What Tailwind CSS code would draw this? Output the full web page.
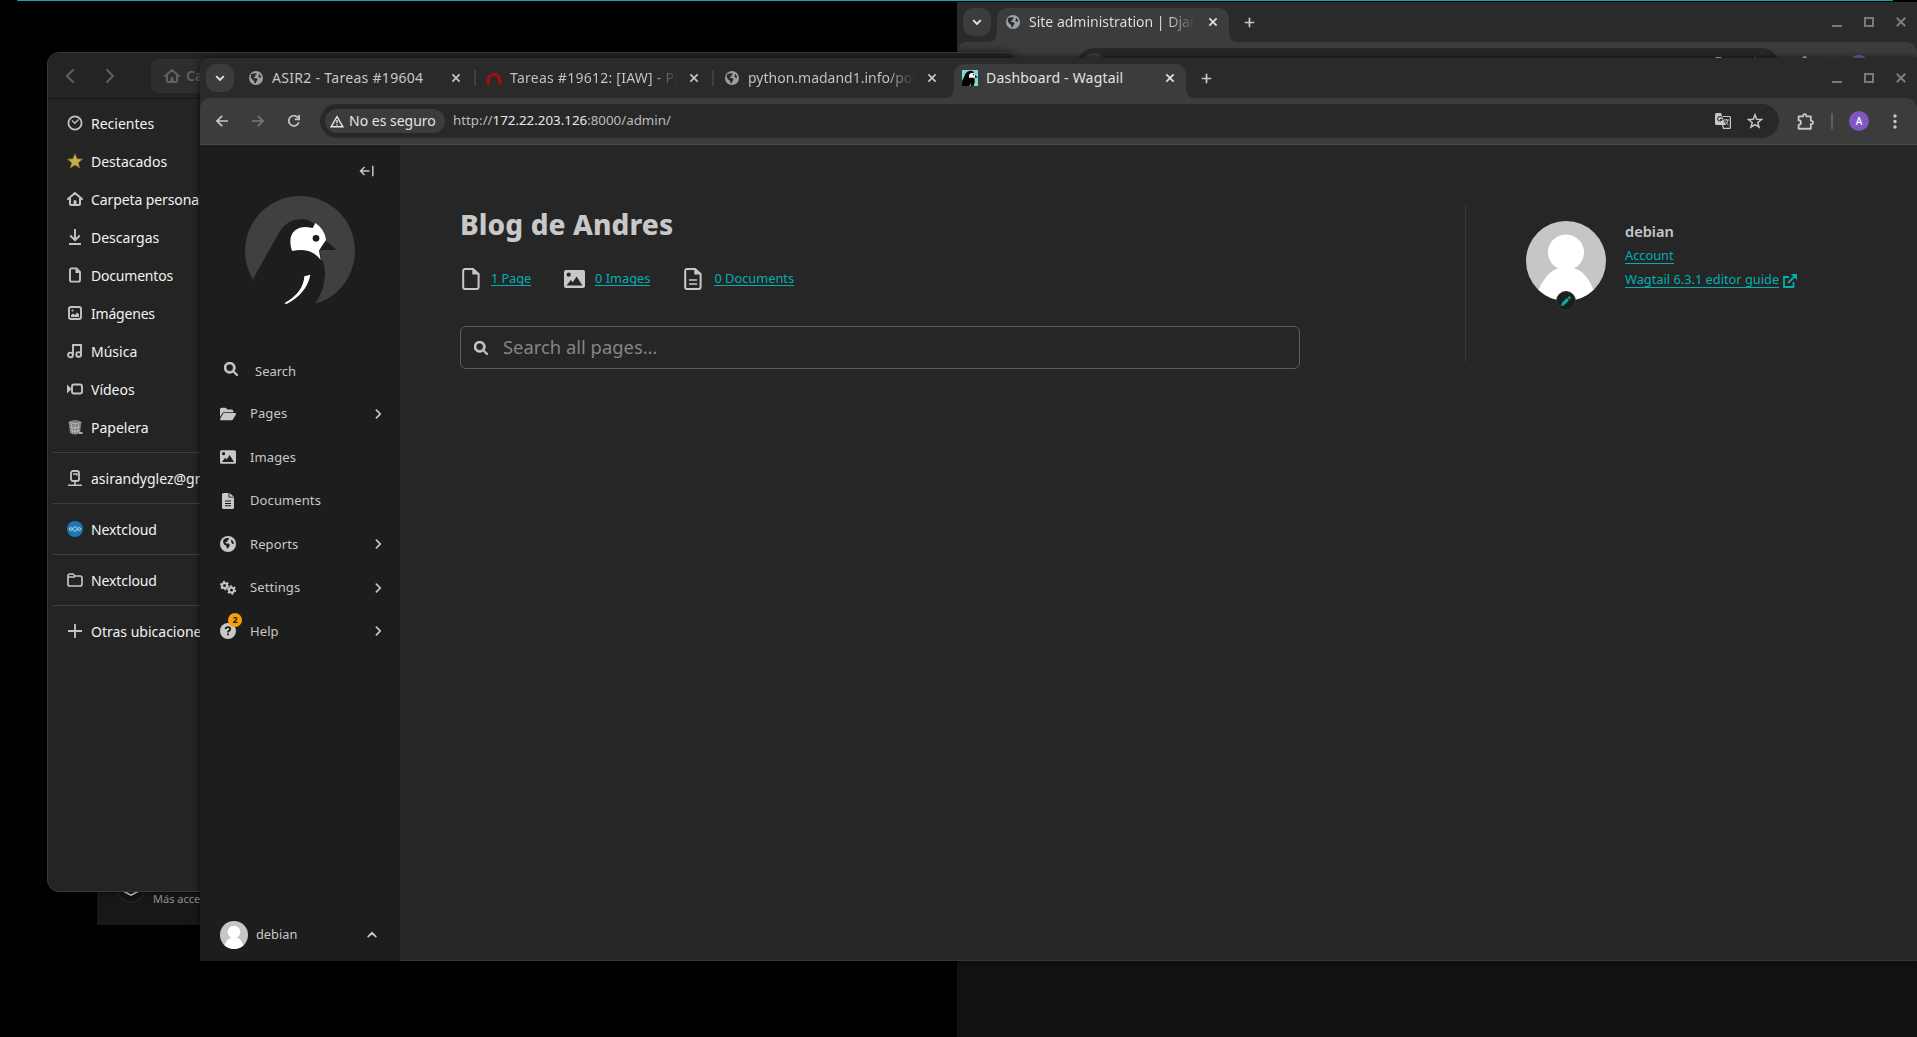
<!DOCTYPE html>
<html lang="es">
<head>
<meta charset="utf-8">
<title>Dashboard - Wagtail</title>
<script src="https://cdn.jsdelivr.net/npm/@tailwindcss/browser@4"></script>
</head>
<body class="relative h-[1037px] w-[1917px] overflow-hidden bg-black font-['Noto_Sans',sans-serif] text-[14px] leading-none whitespace-nowrap">

<svg class="hidden">
  <symbol id="globe" viewBox="0 0 16 16"><circle cx="8" cy="8" r="8" fill="currentColor"/><path d="M2.300 3.800Q5 2.200 8.200 2.600L9 3.600 7.200 4.800 7.400 6.200 5.400 7 6 8 9 8.400 9.800 10 8.400 12 7.600 14 6.200 13.600 5.600 11.200 3.600 9.600 2 7ZM11.400 3.200Q13.400 4.600 13.900 7L12.600 8 11.400 7.200 10.400 5.600 11.400 4.800Z" fill="#2c2c2c"/></symbol>
  <symbol id="earth" viewBox="0 0 16 16"><circle cx="8" cy="8" r="8" fill="currentColor"/><path d="M3.600 3.400Q5.600 1.700 8.400 1.800L9 3.200 7.600 4.400 7.200 5.800 5.400 6.200 6 7.400 8.800 7.600 10 9.200 9 11 7.800 12.600 6.800 12.200 6.200 9.800 4 8.600 3 6ZM11.600 3.600Q13.600 5 14 7.600L12.800 8.200 11.600 7 11 5Z" fill="#222"/></symbol>
  <symbol id="x" viewBox="0 0 10 10"><path d="M1.400 1.400 8.600 8.600M8.600 1.400 1.400 8.600" stroke="currentColor" stroke-width="1.700" fill="none"/></symbol>
  <symbol id="plus" viewBox="0 0 12 12"><path d="M6 .8V11.200M.8 6H11.200" stroke="currentColor" stroke-width="1.900"/></symbol>
  <symbol id="down" viewBox="0 0 10 10"><path d="M1.200 3.200 5 7 8.800 3.200" stroke="currentColor" stroke-width="1.900" fill="none"/></symbol>
  <symbol id="right" viewBox="0 0 10 10"><path d="M3.400 1.200 7.200 5 3.400 8.800" stroke="currentColor" stroke-width="1.700" fill="none" stroke-linecap="round"/></symbol>
  <symbol id="house" viewBox="0 0 16 16"><path d="M1 8 8 2 15 8M3 7.400V12.500Q3 14 4.500 14H11.500Q13 14 13 12.500V7.400" stroke="currentColor" stroke-width="2" fill="none" stroke-linecap="round" stroke-linejoin="round"/><path d="M6.500 14V10.500Q6.500 9 8 9T9.500 10.500V14Z" fill="currentColor"/></symbol>
  <symbol id="lens" viewBox="0 0 512 512"><path fill="currentColor" d="M416 208c0 45.900-14.900 88.300-40 122.700L502.600 457.400c12.500 12.500 12.500 32.800 0 45.300s-32.800 12.500-45.300 0L330.700 376c-34.400 25.200-76.800 40-122.700 40C93.100 416 0 322.900 0 208S93.100 0 208 0S416 93.100 416 208zM208 342a134 134 0 1 0 0-268 134 134 0 1 0 0 268z" stroke="currentColor" stroke-width="22"/></symbol>
  <symbol id="picture" viewBox="0 0 21 18"><path fill="currentColor" fill-rule="evenodd" d="M2 0H19Q21 0 21 2V16Q21 18 19 18H2Q0 18 0 16V2Q0 0 2 0ZM4.700 2.600A2.100 2.100 0 1 0 4.700 6.800 2.100 2.100 0 1 0 4.700 2.600ZM2.600 15.400H18.400L12.600 6.400 8.800 12.200 6.800 10Z"/></symbol>
  <symbol id="person" viewBox="0 0 80 80"><circle cx="40" cy="40" r="40" fill="#c6c6c6"/><path fill="#fff" d="M12.500 69Q21 50 32 47.500A18 18 0 1 1 48 47.500Q60 50 67.500 69A40 40 0 0 1 12.500 69Z"/></symbol>
  <symbol id="flareL" viewBox="0 0 10 10"><path d="M10 0V10H0Q10 10 10 0Z" fill="#3c3c3c"/></symbol>
  <symbol id="flareR" viewBox="0 0 10 10"><path d="M0 0V10H10Q0 10 0 0Z" fill="#3c3c3c"/></symbol>
  <symbol id="translate" viewBox="0 0 16 16"><path d="M1.500 0H6L10.500 12H1.500Q0 12 0 10.500V1.500Q0 0 1.500 0Z" fill="#c7c7c7"/><path d="M6.800 4.600A2.200 2.200 0 1 0 7 6.500H5" stroke="#282828" stroke-width="1.100" fill="none"/><path d="M8 3.500H14.500Q15.400 3.500 15.400 4.400V14.500Q15.400 15.400 14.500 15.400H8.500L7.500 12" stroke="#c7c7c7" stroke-width="1.200" fill="none"/><path d="M9 7H14M11.500 6V7M13 7Q12.500 10 9.800 12M10.300 8.500Q11.500 11 13.500 12" stroke="#c7c7c7" fill="none"/></symbol>
  <symbol id="star" viewBox="0 0 16 16"><path d="M8 1.700 9.700 6.200 14.500 6.500 10.800 9.500 12 14.100 8 11.600 4 14.100 5.200 9.500 1.500 6.500 6.300 6.200Z" fill="none" stroke="currentColor" stroke-width="1.500"/></symbol>
  <symbol id="puzzle" viewBox="0 0 16 16"><path d="M1.500 3.200H5.800V2.600A1.500 1.500 0 0 1 8.800 2.600V3.200H13V7.400H13.600A1.500 1.500 0 0 1 13.600 10.400H13V14.800H1.500V11.200A2.200 2.200 0 0 0 1.500 6.800Z" stroke="currentColor" stroke-width="1.700" fill="none" stroke-linejoin="round"/></symbol>
  <symbol id="controls" viewBox="0 0 74 12"><path d="M0 10H10" stroke="currentColor" stroke-width="2"/><path d="M33 2H41V10H33Z" stroke="currentColor" stroke-width="2" fill="none"/><path d="M64.800 1.800 73.200 10.200M73.200 1.800 64.800 10.200" stroke="currentColor" stroke-width="2.200"/></symbol>
</svg>

<!-- Panel accent -->
<div class="absolute top-0 left-[17px] h-[1px] w-[1876px] rounded-full bg-[#1f9fb5]"></div>

<!-- Launcher window -->
<section class="absolute top-[800px] left-[97px] flex h-[125px] w-[110px] flex-col justify-end overflow-hidden bg-[#171717]">
  <div class="flex h-[46px] items-start gap-2 pl-5">
    <svg class="size-7 shrink-0" viewBox="0 0 28 28"><circle cx="14" cy="10" r="13.500" fill="#141414" stroke="#2d2d2d"/><path d="M7 12.500 14 16.200 21 12.500" stroke="#d8d8d8" stroke-width="1.600" fill="none"/></svg>
    <span class="mt-[14px] text-[11px]  text-[#949494]">Más accesorios</span>
  </div>
</section>

<!-- Background browser -->
<section class="absolute top-[2px] left-[957px] flex h-[1035px] w-[960px] flex-col bg-[#121212]">
  <div class="flex h-10 shrink-0 bg-[#2a2a2a] pt-[6px] pl-[6px]">
    <div class="flex size-7 items-center justify-center rounded-[10px] bg-[#3c3c3c] text-[#e3e3e3]"><svg class="size-[10px]"><use href="#down"/></svg></div>
    <div class="relative ml-[6px] flex h-[34px] w-[232px] items-center rounded-t-[10px] bg-[#3c3c3c] pb-[6px] pl-[9px] text-[#e3e3e3]">
      <svg class="absolute bottom-0 -left-[10px] size-[10px]"><use href="#flareL"/></svg>
      <svg class="absolute -right-[10px] bottom-0 size-[10px]"><use href="#flareR"/></svg>
      <svg class="size-[14px] text-[#9aa0a6]"><use href="#globe"/></svg>
      <span class="ml-[9px] w-[167px] overflow-hidden bg-linear-to-r from-[#e3e3e3] from-82% to-[#3c3c3c] bg-clip-text py-1 text-transparent">Site administration | Django</span>
      <svg class="ml-3 size-[10px]"><use href="#x"/></svg>
    </div>
    <svg class="mt-[9px] ml-[15px] size-[11px] text-[#c7c7c7]"><use href="#plus"/></svg>
    <svg class="mt-2 mr-[11px] ml-auto h-3 w-[74px] text-[#7a7a7a]"><use href="#controls"/></svg>
  </div>
  <div class="bg-[#2a2a2a]">
    <div class="flex h-[46px] items-center rounded-t-[10px] border-b border-[#4a4a4a] bg-[#3c3c3c] text-[#c7c7c7]">
      <div class="ml-[120px] flex h-[34px] w-[702px] items-center rounded-full bg-[#282828] pr-4 pl-[5px]">
        <div class="size-6 rounded-full bg-[#3c3c3c]"></div>
        <svg class="ml-auto size-4"><use href="#translate"/></svg>
        <svg class="ml-4 size-4"><use href="#star"/></svg>
      </div>
      <svg class="ml-[18px] size-[17px]"><use href="#puzzle"/></svg>
      <div class="ml-[17px] h-4 w-[2px] bg-[#5f5f5f]"></div>
      <div class="ml-4 size-5 rounded-full bg-[#7e57c2]"></div>
    </div>
  </div>
</section>

<!-- File manager -->
<section class="absolute top-[52px] left-[47px] h-[840px] w-[969px] overflow-hidden rounded-[12px] border border-[#3a3a3a] bg-[#242424] shadow-[0_0_8px_rgba(0,0,0,0.600)]">
  <header class="flex h-[46px] items-center border-b border-[#161616] bg-[#242424] text-[#616161]">
    <svg class="ml-[17px] h-4 w-[10px]" viewBox="0 0 10 16"><path d="M8.500 1.500 2 8 8.500 14.500" stroke="currentColor" stroke-width="2" fill="none"/></svg>
    <svg class="ml-[30px] h-4 w-[10px]" viewBox="0 0 10 16"><path d="M1.500 1.500 8 8 1.500 14.500" stroke="currentColor" stroke-width="2" fill="none"/></svg>
    <div class="ml-[36px] flex h-[34px] w-[700px] items-center gap-[6px] rounded-lg bg-[#2e2e2e] pl-[13px]"><svg class="size-4"><use href="#house"/></svg><b class="w-5 overflow-hidden py-1 font-semibold">Ca</b></div>
  </header>
  <nav class="w-[240px] pt-[5px] text-[#f2f2f2] [&>div]:flex [&>div]:h-[38px] [&>div]:items-center [&>div]:gap-2 [&>div]:pt-[1px] [&>div]:pl-[19px] [&>hr]:mt-[6px] [&>hr]:mb-[6px] [&>hr]:ml-[5px] [&>hr]:border-[#404040] [&_svg]:-mt-[1px] [&_svg]:size-4 [&_svg]:shrink-0 [&_svg]:text-[#c4c4c4]">
    <div><svg viewBox="0 0 16 16" fill="none" stroke="currentColor"><circle cx="8" cy="8" r="6.600" stroke-width="1.800"/><path d="M5 5.500 7.800 8.300 11.500 4.500" stroke-width="1.300"/></svg>Recientes</div>
    <div><svg viewBox="0 0 16 16"><path d="M8 .8 10 5.800 15.500 6.200 11.300 9.700 12.600 15 8 12 3.400 15 4.700 9.700 .5 6.200 6 5.800Z" fill="#c5b150" stroke="#8a7320" stroke-width=".8"/></svg>Destacados</div>
    <div><svg><use href="#house"/></svg><span class="-tracking-[0.100px]">Carpeta personal</span></div>
    <div><svg viewBox="0 0 16 16" fill="none" stroke="currentColor" stroke-width="1.900"><path d="M8 0V11M3.200 6.500 8 11.200 12.800 6.500M2 15H14"/></svg>Descargas</div>
    <div><svg viewBox="0 0 16 16"><path d="M4.500 1.400H9.500L13 5V13Q13 14.600 11.400 14.600H4.600Q3 14.600 3 13V3Q3 1.400 4.500 1.400Z" fill="none" stroke="currentColor" stroke-width="1.900"/><path d="M8.500 1V6H13Z" fill="currentColor"/></svg><span class="-tracking-[0.200px]">Documentos</span></div>
    <div><svg viewBox="0 0 16 16"><rect x="2" y="2" width="12" height="12" rx="2" fill="none" stroke="currentColor" stroke-width="1.900"/><path d="M4 12V10L6 8.500 8 10 10 7.500 12 9.500V12Z" fill="currentColor"/><circle cx="5.500" cy="5.500" r="1" fill="currentColor"/></svg><span class="-tracking-[0.200px]">Imágenes</span></div>
    <div><svg viewBox="0 0 16 16" fill="none" stroke="currentColor" stroke-width="1.900"><path d="M6 12V2H14V11"/><circle cx="3.500" cy="12" r="2.400"/><circle cx="11.700" cy="11.500" r="2.400"/></svg>Música</div>
    <div><svg viewBox="0 0 16 16"><rect x="5" y="3.500" width="10" height="9" rx="2" fill="none" stroke="currentColor" stroke-width="1.900"/><path d="M0 3.500 4.500 8 0 12.500Z" fill="currentColor"/></svg>Vídeos</div>
    <div><svg viewBox="0 0 16 16"><path d="M1.500 3Q8-1 14.500 3L13 14Q8 17 3 14Z" fill="#808080"/><path d="M2 3.500Q8 6 14 3.500M4.500 5 5.500 14M8 5.500V15M11.500 5 10.500 14M3 8Q8 10 13 8M3.500 11.500Q8 13.500 13 11.500" stroke="#c8c8c8" stroke-width=".7" fill="none"/><path d="M12 13h3.500v2H12Z" fill="#aaa"/></svg>Papelera</div>
    <hr>
    <div><svg viewBox="0 0 16 16"><rect x="4" y="1" width="8" height="10" rx="2" fill="none" stroke="currentColor" stroke-width="1.800"/><path d="M6 4H10V5.500M8 11.500V15M1 15.200H15" stroke="currentColor" stroke-width="1.600" fill="none"/></svg>asirandyglez@gmail.com</div>
    <hr>
    <div><svg viewBox="0 0 16 16"><circle cx="8" cy="8" r="8" fill="#1b7ab5"/><g fill="none" stroke="#b9d3e3" stroke-width="1"><circle cx="8" cy="8" r="2.200"/><circle cx="3.800" cy="8" r="1.400"/><circle cx="12.200" cy="8" r="1.400"/></g></svg><span class="-tracking-[0.100px]">Nextcloud</span></div>
    <hr>
    <div><svg viewBox="0 0 16 16"><path d="M1 4Q1 2 3 2H6L8 4H13Q15 4 15 6V12Q15 14 13 14H3Q1 14 1 12Z M1.500 5H8" fill="none" stroke="currentColor" stroke-width="1.700"/></svg><span class="-tracking-[0.100px]">Nextcloud</span></div>
    <hr>
    <div><svg viewBox="0 0 16 16"><path d="M8 1V15M1 8H15" stroke="currentColor" stroke-width="1.800"/></svg><span>Otras ubicaciones</span></div>
  </nav>
</section>

<!-- Foreground browser -->
<section class="absolute top-[58px] left-[200px] flex h-[903px] w-[1717px] flex-col rounded-tl-[8px] bg-[#2a2a2a] shadow-[0_0_7px_rgba(0,0,0,0.700)]">
  <div class="flex h-10 shrink-0 pt-[6px] pl-[6px] text-[#c7c7c7]">
    <div class="flex size-7 items-center justify-center rounded-[10px] bg-[#3c3c3c] text-[#e3e3e3]"><svg class="size-[10px]"><use href="#down"/></svg></div>
    <div class="flex h-7 w-[240px] items-center pl-[15px]">
      <svg class="size-[14px] text-[#9aa0a6]"><use href="#globe"/></svg>
      <span class="ml-[9px] w-[167px] tracking-[0.300px]">ASIR2 - Tareas #19604</span>
      <svg class="ml-3 size-[10px]"><use href="#x"/></svg>
    </div>
    <div class="flex h-7 w-[238px] items-center">
      <i class="h-4 w-[2px] bg-[#3f3f3f]"></i>
      <svg class="ml-[10px] h-[14px] w-4" viewBox="0 0 16 14"><path d="M2.200 13.500V9.500A5.800 6.200 0 0 1 13.800 9.500V13.500" fill="none" stroke="#b80a0c" stroke-width="3" stroke-dasharray="2.900 .5"/></svg>
      <span class="ml-2 w-[168px] overflow-hidden bg-linear-to-r from-[#c7c7c7] from-84% to-[#2a2a2a] bg-clip-text py-1 tracking-[0.250px] text-transparent">Tareas #19612: [IAW] - Práctica</span>
      <svg class="ml-[11px] size-[10px]"><use href="#x"/></svg>
    </div>
    <div class="flex h-7 w-[242px] items-center">
      <i class="h-4 w-[2px] bg-[#3f3f3f]"></i>
      <svg class="ml-[11px] size-[14px] text-[#9aa0a6]"><use href="#globe"/></svg>
      <span class="ml-[9px] w-[167px] overflow-hidden bg-linear-to-r from-[#c7c7c7] from-84% to-[#2a2a2a] bg-clip-text py-1 text-transparent">python.madand1.info/polls</span>
      <svg class="ml-3 size-[10px]"><use href="#x"/></svg>
    </div>
    <div class="relative flex h-[34px] w-[232px] items-center rounded-t-[10px] bg-[#3c3c3c] pb-[6px] pl-2 text-[#e3e3e3]">
      <svg class="absolute bottom-0 -left-[10px] size-[10px]"><use href="#flareL"/></svg>
      <svg class="absolute -right-[10px] bottom-0 size-[10px]"><use href="#flareR"/></svg>
      <svg class="size-4" viewBox="0 0 16 16"><path d="M0 0H16V16H0Z" fill="#7fd9dc"/><path d="M0 11.500 3.500 3.500Q5.500 .6 9 .8 11 1 12 2.500L13.500 5.200 15.600 7.600 12.500 7.800Q13.500 12 11.500 16H0Z" fill="#000"/><path d="M7.200 8Q6.200 3 10 3L12 2.800Q13.700 4.500 13.200 6L12.200 8.500Q10.500 7 7.200 8ZM6.800 15.800 8.200 15.200 9 13 9.300 13 8.600 16Z" fill="#fff"/><circle cx="11.500" cy="4.800" r=".7"/></svg>
      <span class="ml-2 w-[167px] tracking-[0.200px]">Dashboard - Wagtail</span>
      <svg class="ml-3 size-[10px]"><use href="#x"/></svg>
    </div>
    <svg class="mt-[9px] ml-[15px] size-[11px]"><use href="#plus"/></svg>
    <svg class="mt-2 mr-[11px] ml-auto h-3 w-[74px] text-[#7a7a7a]"><use href="#controls"/></svg>
  </div>

  <div class="flex h-[47px] shrink-0 items-center rounded-t-[10px] border-b border-[#4a4a4a] bg-[#3c3c3c] text-[#c7c7c7]">
    <svg class="ml-4 size-3" viewBox="0 0 12 12"><path d="M12 6H1.200M6.200 .8 1 6 6.200 11.200" stroke="currentColor" stroke-width="1.700" fill="none"/></svg>
    <svg class="ml-6 size-3 text-[#767676]" viewBox="0 0 12 12"><path d="M0 6H10.800M5.800 .8 11 6 5.800 11.200" stroke="currentColor" stroke-width="1.700" fill="none"/></svg>
    <svg class="ml-6 size-3" viewBox="0 0 12 12"><path d="M10.800 7.200A5.100 5.100 0 1 1 10 2.800M11.100 0V4.300H6.800" stroke="currentColor" stroke-width="1.700" fill="none"/></svg>
    <div class="ml-5 flex h-[34px] w-[1459px] items-center rounded-full bg-[#282828] pr-4 pl-[5px]">
      <div class="flex h-6 w-[120px] items-center gap-[5px] rounded-full bg-[#3c3c3c] pl-[5px] text-[#e3e3e3]">
        <svg class="h-[13px] w-[14px] shrink-0" viewBox="0 0 15 13"><path d="M7.500 1.200 13.800 12.200H1.200ZM7.500 5V8.300M7.500 9.400V10.800" stroke="currentColor" stroke-width="1.500" fill="none"/></svg>
        <span>No es seguro</span>
      </div>
      <span class="ml-[8px] text-[13.330px] text-[#bcbcbc]">http://<span class="text-[#e6e6e6]">172.22.203.126</span>:8000/admin/</span>
      <svg class="ml-auto size-4"><use href="#translate"/></svg>
      <svg class="ml-4 size-4"><use href="#star"/></svg>
    </div>
    <svg class="ml-[18px] size-[17px]"><use href="#puzzle"/></svg>
    <div class="ml-[17px] h-4 w-[2px] bg-[#5f5f5f]"></div>
    <div class="ml-4 flex size-5 items-center justify-center rounded-full bg-[#7e57c2] text-[10px] font-medium text-white">A</div>
    <svg class="ml-[24px] h-[15px] w-1" viewBox="0 0 4 15"><g fill="currentColor"><circle cx="2" cy="2" r="1.700"/><circle cx="2" cy="7.500" r="1.700"/><circle cx="2" cy="13" r="1.700"/></g></svg>
  </div>

  <div class="flex min-h-0 flex-1 bg-[#262626]">
    <!-- Wagtail sidebar -->
    <aside class="flex w-[200px] shrink-0 flex-col bg-[#1d1d1d] text-[13px] text-[#c8c8c8]">
      <svg class="mt-5 ml-[159px] h-3 w-[15px]" viewBox="0 0 15 12"><path d="M10.500 6H1.500M5.500 2 1.500 6 5.500 10M13.800 .8V11.200" stroke="currentColor" stroke-width="1.500" fill="none"/></svg>
      <svg class="mt-[19px] size-[110px] self-center" viewBox="0 0 330 330"><circle cx="165" cy="165" r="165" fill="#404040"/>
        <path d="M25 247 105 105Q128 69 170 69 190 69 206 82L243 133Q230 150 225 165L228 185Q240 205 240 235 238 285 210 325L212 335H60Z" fill="#1d1d1d"/>
        <path d="M243 134 275 162H224Z" fill="#1d1d1d"/>
        <path d="M141 165C125 115 150 93 183 93Q195 94 203 96L211 81Q240 100 243 132 230 150 222 164L227 192Q205 162 170 162 155 162 141 165Z" fill="#fff"/>
        <circle cx="213" cy="127" r="10" fill="#1d1d1d"/>
        <path d="M178 241 196 236Q187 290 125 324L118 322Q175 290 178 241Z" fill="#fff"/></svg>
      <div class="mt-[45px] mb-[1px] flex h-10 items-center pl-6"><svg class="-mt-1 size-[14px]"><use href="#lens"/></svg><span class="ml-[17px]">Search</span></div>
      <nav class="[&>div]:flex [&>div]:h-[43.500px] [&>div]:items-center [&>div]:pr-[17px] [&>div]:pl-5 [&>div>svg:first-child]:size-4 [&>div>span]:ml-[14px] [&>div>span]:tracking-[0.100px] [&>div>svg:last-child]:ml-auto [&>div>svg:last-child]:size-[10px]">
        <div><svg viewBox="0 0 576 512"><path fill="currentColor" d="M88.700 223.800L0 375.800V96C0 60.700 28.700 32 64 32H181.500c17 0 33.300 6.700 45.300 18.700l26.500 26.500c12 12 28.300 18.700 45.300 18.700H416c35.300 0 64 28.700 64 64v32H144c-22.800 0-43.800 12.100-55.300 31.800zm27.600 16.100C122.100 230 132.600 224 144 224H544c11.500 0 22 6.100 27.700 16.100s5.700 22.200-.1 32.100l-112 192C453.900 474 443.400 480 432 480H32c-11.500 0-22-6.100-27.700-16.100s-5.700-22.200 .1-32.100l112-192z"/></svg><span>Pages</span><svg><use href="#right"/></svg></div>
        <div><svg><use href="#picture"/></svg><span>Images</span></div>
        <div><svg viewBox="0 0 16 16"><path fill-rule="evenodd" fill="currentColor" d="M3.500 0H8.500V4.500H14V14.500Q14 16 12.500 16H3.500Q2 16 2 14.500V1.500Q2 0 3.500 0ZM9.500 0 14 3.700H9.500ZM5 7.600V8.600H11V7.600ZM5 10V11H11V10ZM5 12.300V13.300H11V12.300Z"/></svg><span>Documents</span></div>
        <div><svg><use href="#earth"/></svg><span>Reports</span><svg><use href="#right"/></svg></div>
        <div><svg viewBox="0 0 16 16" fill="none" stroke="currentColor"><circle cx="4.500" cy="5.500" r="2.500" stroke-width="2"/><circle cx="4.500" cy="5.500" r="4" stroke-width="1.400" stroke-dasharray="2 2.190"/><circle cx="11.500" cy="10" r="2.500" stroke-width="2"/><circle cx="11.500" cy="10" r="4" stroke-width="1.400" stroke-dasharray="2 2.190"/></svg><span>Settings</span><svg><use href="#right"/></svg></div>
        <div class="relative"><svg viewBox="0 0 16 16"><circle cx="8" cy="8" r="8" fill="currentColor"/><path d="M5.600 6.200Q5.800 4.200 8 4.200T10.300 6.100Q10.300 7.200 8.900 7.900 8 8.400 8 9.400M8 10.600V12.300" fill="none" stroke="#1d1d1d" stroke-width="1.800"/></svg><b class="absolute top-[3px] left-7 flex size-[14px] items-center justify-center rounded-full bg-[#f9a006] text-[9px] text-[#1d1d1d]">2</b><span>Help</span><svg><use href="#right"/></svg></div>
      </nav>
      <div class="mt-auto flex h-[53px] items-center pr-[23px] pl-5"><svg class="size-7"><use href="#person"/></svg><span class="ml-2 text-[12.800px]">debian</span><svg class="ml-auto size-[10px] -rotate-90"><use href="#right"/></svg></div>
    </aside>

    <main class="flex flex-1 border-b border-[#363636] pl-[60px] text-[#c8c8c8]">
      <div class="w-[840px] pt-[61px]">
        <h1 class="text-[28px] leading-9 font-extrabold tracking-[0.100px]">Blog de Andres</h1>
        <ul class="mt-[25px] flex h-6 items-center text-[12.800px] text-[#00b0b1] [&_span]:border-b [&_span]:border-[#00b0b1] [&_span]:pb-[1px] [&_svg]:text-[#c8c8c8]">
          <li class="flex items-center"><svg class="ml-[2px] h-[22px] w-[18px]" viewBox="0 0 18 22"><path d="M3 1.100H11L16.600 6V19Q16.600 20.900 14.700 20.900H3Q1.200 20.900 1.200 19V3Q1.200 1.100 3 1.100Z" fill="none" stroke="currentColor" stroke-width="2"/><path d="M10.300 1V6.600H17Z" fill="currentColor"/></svg><span class="ml-[11px] -tracking-[0.100px]">1 Page</span></li>
          <li class="ml-[33px] flex items-center"><svg class="h-[18px] w-[21px]"><use href="#picture"/></svg><span class="ml-[10px]">0 Images</span></li>
          <li class="ml-[34px] flex items-center"><svg class="h-[22px] w-[18px]" viewBox="0 0 18 22"><path d="M3 1.100H11L16.600 6V19Q16.600 20.900 14.700 20.900H3Q1.200 20.900 1.200 19V3Q1.200 1.100 3 1.100Z" fill="none" stroke="currentColor" stroke-width="2"/><path d="M10.300 1V6.600H17Z" fill="currentColor"/><path d="M5 12H13M5 16H13" stroke="currentColor" stroke-width="1.600"/></svg><span class="ml-3">0 Documents</span></li>
        </ul>
        <div class="mt-[35px] flex h-[43px] items-center rounded-md border border-[#5c5c5c] pl-[13px]"><svg class="size-[14px]"><use href="#lens"/></svg><span class="ml-[15px] text-[18.400px] text-[#858585]">Search all pages…</span></div>
      </div>
      <section class="mt-[60px] ml-[165px] flex h-[157px] border-l border-[#363636] pt-4 pl-[60px]">
        <div class="relative size-20"><svg class="size-20"><use href="#person"/></svg>
          <div class="absolute top-[70px] left-[30px] flex size-5 items-center justify-center rounded-full border border-[#363636] bg-[#1d1d1d]"><svg class="size-[10px]" viewBox="0 0 10 10"><path d="M0 10 .8 7 5.800 2 8 4.200 3 9.200ZM6.500 1.300 7.500 .4Q8.200 0 8.800 .6L9.500 1.300Q10 2 9.500 2.600L8.700 3.500Z" fill="#00b0b1"/></svg></div>
        </div>
        <div class="ml-[19px] flex flex-col items-start text-[12.800px] text-[#00b0b1]">
          <b class="mt-[3px] text-[14.600px] leading-[15px] font-semibold text-[#c8c8c8]">debian</b>
          <span class="mt-[10px] border-b border-[#00b0b1] pb-[1px] leading-[13px]">Account</span>
          <div class="mt-[9px] flex items-center"><span class="border-b border-[#00b0b1] pb-[1px] leading-[13px]">Wagtail 6.3.1 editor guide</span><svg class="ml-1 size-[14px]" viewBox="0 0 14 14"><path d="M6 3H1V13H10.500V8M5 9 11.500 2.500" fill="none" stroke="currentColor" stroke-width="1.800"/><path d="M8 0H14V6Z" fill="currentColor"/></svg></div>
        </div>
      </section>
    </main>
  </div>
</section>
</body>
</html>
